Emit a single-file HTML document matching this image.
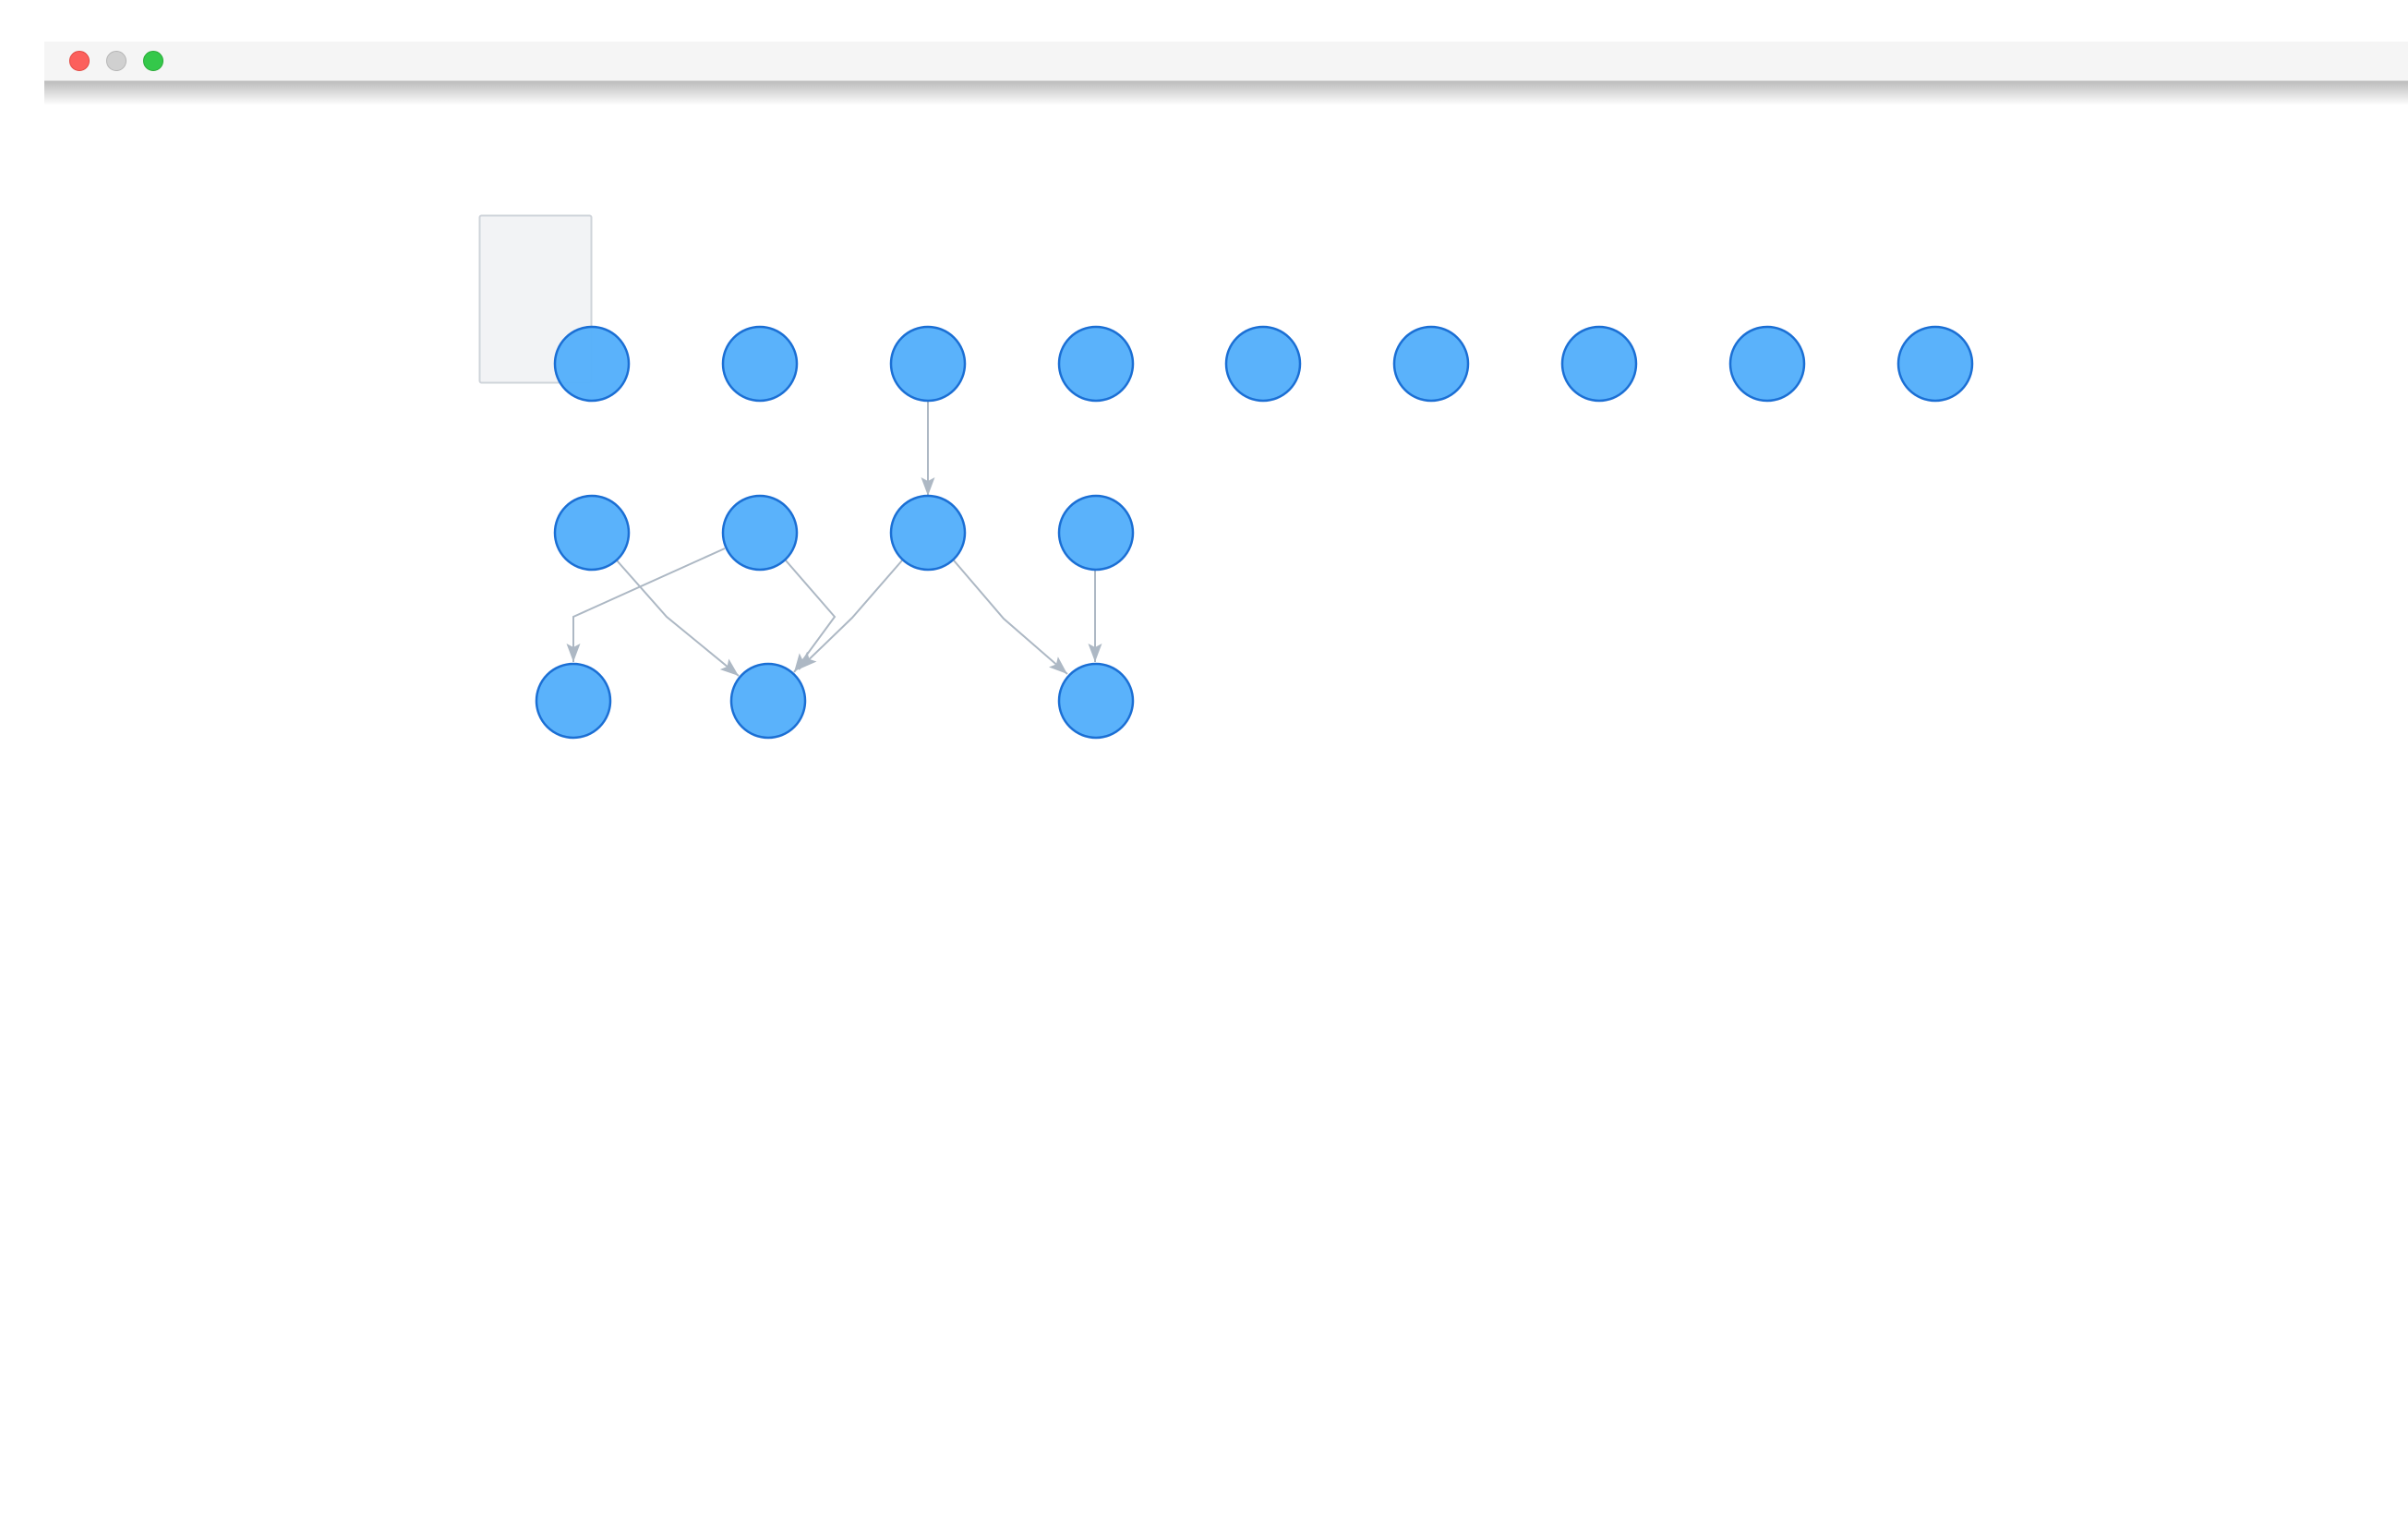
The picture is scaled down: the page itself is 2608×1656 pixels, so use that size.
<!DOCTYPE html>
<html><head><style>
html,body{margin:0;padding:0;background:#fff;width:2608px;height:1656px;overflow:hidden;font-family:"Liberation Sans",sans-serif}
.bar{position:absolute;left:48px;top:45px;width:2560px;height:42px;background:#f5f5f5;border-bottom:2px solid #d8d8d8}
.sh{position:absolute;left:48px;top:88px;width:2560px;height:26px;background:linear-gradient(#bcbcbc,rgba(255,255,255,0))}
.d{position:absolute;top:55px;width:22px;height:22px;border-radius:50%;box-sizing:border-box}
</style></head><body>
<div class="bar"></div><div class="sh"></div>
<div class="d" style="left:75px;background:#fc605c;border:1px solid #e2463f"></div>
<div class="d" style="left:115px;background:#d0d0d0;border:1px solid #b5b5b5"></div>
<div class="d" style="left:155px;background:#34c84a;border:1px solid #27aa35"></div>
<svg width="2608" height="1656" style="position:absolute;left:0;top:0">
<defs>
<marker id="b" markerWidth="20" markerHeight="15" refX="20" refY="7.5" orient="auto" markerUnits="userSpaceOnUse"><path d="M0 0L20 7.5L0 15L4 7.5z" fill="#adb8c4"/></marker></defs>
<rect x="519.5" y="233.5" width="121" height="181" rx="2" fill="#f2f3f5" stroke="#cfd4da" stroke-width="2"/>
<g fill="none" stroke="#adb8c4" stroke-width="2">
<path d="M1005 434L1005 537" marker-end="url(#b)"/>
<path d="M668 607L722 668L800 732" marker-end="url(#b)"/>
<path d="M785 594L621 668L621 717" marker-end="url(#b)"/>
<path d="M851 607L904 668L860 728" marker-end="url(#b)"/>
<path d="M977 607L923 669L865 725" marker-end="url(#b)"/>
<path d="M1033 607L1087 670L1156 730" marker-end="url(#b)"/>
<path d="M1186 617L1186 717" marker-end="url(#b)"/>
</g>
<g fill="#55b0fb" fill-opacity="0.97" stroke="#1b6fd4" stroke-width="2.5">
<circle cx="641" cy="394" r="40"/><circle cx="823" cy="394" r="40"/><circle cx="1005" cy="394" r="40"/><circle cx="1187" cy="394" r="40"/><circle cx="1368" cy="394" r="40"/><circle cx="1550" cy="394" r="40"/><circle cx="1732" cy="394" r="40"/><circle cx="1914" cy="394" r="40"/><circle cx="2096" cy="394" r="40"/>
<circle cx="641" cy="577" r="40"/><circle cx="823" cy="577" r="40"/><circle cx="1005" cy="577" r="40"/><circle cx="1187" cy="577" r="40"/>
<circle cx="621" cy="759" r="40"/><circle cx="832" cy="759" r="40"/><circle cx="1187" cy="759" r="40"/>
</g>
</svg>
</body></html>
